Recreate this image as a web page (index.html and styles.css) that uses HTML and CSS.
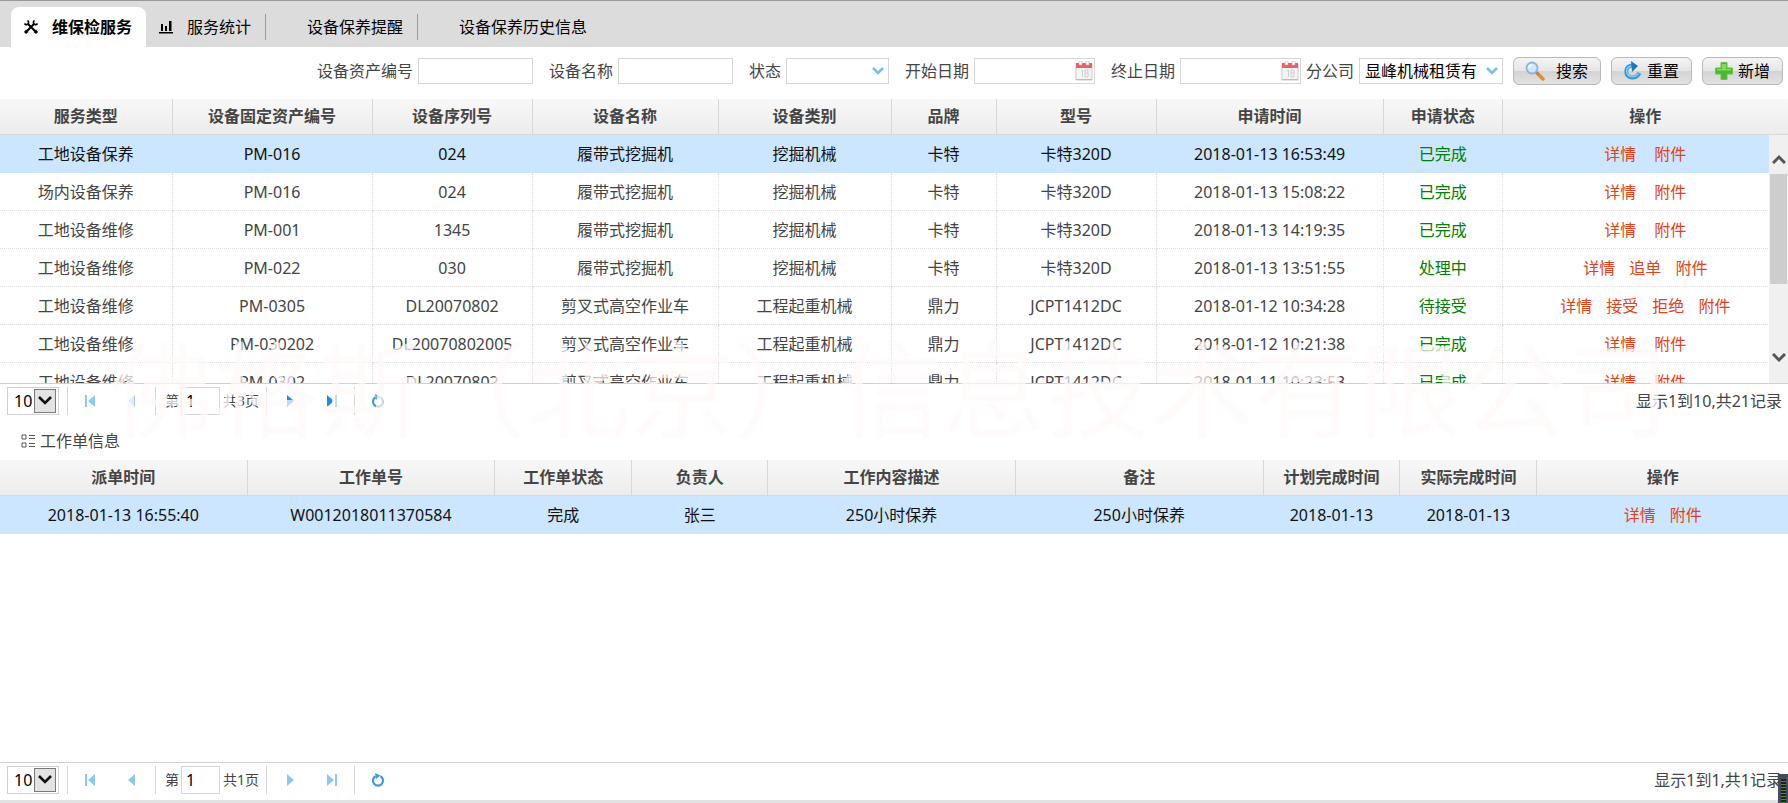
FILE: index.html
```
<!DOCTYPE html>
<html lang="zh-CN">
<head>
<meta charset="utf-8">
<title>维保检服务</title>
<link rel="stylesheet" href="styles.css">
</head>

<body>
<svg class="defs" width="0" height="0">
	<symbol id="cal" viewBox="0 0 18 20">
		<rect x="1" y="3" width="16" height="16" fill="#f5f5f5" stroke="#c9cdcd"/>
		<path d="M1 2h16v5H1z" fill="#e8616a"/>
		<path d="M4 0h3v4H4zM11 0h3v4h-3z" fill="#fff" stroke="#e9a0a4" stroke-width=".6"/>
		<path d="M6 10l1.500-1v7M10 9h3v7h-3zM10 12h3" fill="none" stroke="#cfcfcf"/>
		<path d="M1 18.500h16" stroke="#a9c4c4"/>
	</symbol>
	<symbol id="down" viewBox="0 0 14 10"><path d="M2 2l5 5 5-5" fill="none" stroke="#76c0ec" stroke-width="2.600"/></symbol>
	<symbol id="box" viewBox="0 0 22 24">
		<rect x=".5" y=".5" width="21" height="23" fill="#e3e3e3" stroke="#7a7a7a"/>
		<path d="M5 8l6 6 6-6" fill="none" stroke="#111" stroke-width="2.600"/>
	</symbol>
	<symbol id="first" viewBox="0 0 12 12"><path d="M1 0h2v12H1zM11 0v12L4 6z"/></symbol>
	<symbol id="prev" viewBox="0 0 12 12"><path d="M9 0v12L2 6z"/></symbol>
	<symbol id="next" viewBox="0 0 12 12"><path d="M3 0v12l7-6z"/></symbol>
	<symbol id="last" viewBox="0 0 12 12"><path d="M9 0h2v12H9zM1 0v12l7-6z"/></symbol>
	<symbol id="load" viewBox="0 0 14 14">
		<path d="M4.500 3.300A5 5 0 1 0 9.500 3.300" fill="none" stroke="#3c9bd6" stroke-width="2.200"/>
		<path d="M4 0l5.500 2.500L5 6z" fill="#3c9bd6"/>
	</symbol>
</svg>

<div class="tabs">
	<a class="tab on" href="#">
		<svg class="ico" viewBox="0 0 16 16"><path d="M4.500 4.500l7.500 7.500M11.500 4.500L4 12" stroke="#000" stroke-width="2"/><path d="M4.500 1.500A2.200 2.200 0 1 1 1.500 4.500M11.500 1.500A2.200 2.200 0 1 0 14.500 4.500" fill="none" stroke="#000" stroke-width="1.600"/><path d="M1 13l2-2.500 2.500 2.500L3 15zM15 13l-2-2.500-2.500 2.500L13 15z"/></svg>
		维保检服务
	</a>
	<a class="tab" href="#">
		<svg class="ico" viewBox="0 0 16 16"><path d="M1 13h14v1.500H1zM3 5h2v7H3zM7 7h2v5H7zM11 2h2.500v10H11z"/></svg>
		服务统计
	</a>
	<a class="tab line" href="#">设备保养提醒</a>
	<a class="tab line" href="#">设备保养历史信息</a>
</div>

<form class="search">
	<label for="code">设备资产编号</label><input class="txt" id="code" type="text">
	<label for="name">设备名称</label><input class="txt" id="name" type="text">
	<label for="state">状态</label><span class="sel"><select id="state"><option></option></select><svg><use href="#down"/></svg></span>
	<label for="start">开始日期</label><span class="date"><input id="start" type="text"><svg><use href="#cal"/></svg></span>
	<label for="end">终止日期</label><span class="date"><input id="end" type="text"><svg><use href="#cal"/></svg></span>
	<label class="near" for="comp">分公司</label><span class="sel comp"><select id="comp"><option>显峰机械租赁有限公司</option></select><svg><use href="#down"/></svg></span>
	<button class="btn wide" type="button">
		<svg viewBox="0 0 20 20"><path d="M12 12l6 6" stroke="#d98e3a" stroke-width="3.500" stroke-linecap="round"/><path d="M11 11l2.500 2.500" stroke="#888" stroke-width="2"/><circle cx="7" cy="7" r="5.500" fill="#cfe9fb" stroke="#8fb2dc" stroke-width="1.800"/><path d="M4 7a3 3 0 0 1 3-3" fill="none" stroke="#fff" stroke-width="1.500"/></svg>
		搜索
	</button>
	<button class="btn" type="button">
		<svg viewBox="0 0 20 20"><path d="M9 4.500C4 5 2.500 9 3.500 12.500 5 17.500 13 18.500 16.500 12" fill="none" stroke="#3a9ad9" stroke-width="4"/><path d="M8.500 5C4 5.500 3 9 4 12c1.500 4.500 8.500 5 11.500.5" fill="none" stroke="#8ed0f5" stroke-width="1.300"/><path d="M8 0l7 5-6 6z" fill="#1f78b8"/></svg>
		重置
	</button>
	<button class="btn" type="button">
		<svg viewBox="0 0 20 20"><path d="M7 1.500h6V7h5.500v6H13v5.500H7V13H1.500V7H7z" fill="#4cb82e" stroke="#6bbf4c"/><path d="M8 3h4v5h5v1.500H3V8h5z" fill="#84d956"/></svg>
		新增
	</button>
</form>

<div class="list">
	<table class="grid">
		<colgroup><col class="w172"><col class="w200"><col class="w160"><col class="w186"><col class="w173"><col class="w105"><col class="w160"><col class="w227"><col class="w119"><col></colgroup>
		<thead>
			<tr><th>服务类型</th><th>设备固定资产编号</th><th>设备序列号</th><th>设备名称</th><th>设备类别</th><th>品牌</th><th>型号</th><th>申请时间</th><th>申请状态</th><th>操作</th></tr>
		</thead>
		<tbody>
			<tr class="cur"><td>工地设备保养</td><td>PM-016</td><td>024</td><td>履带式挖掘机</td><td>挖掘机械</td><td>卡特</td><td>卡特320D</td><td>2018-01-13 16:53:49</td><td class="ok">已完成</td><td class="op two"><a href="#">详情</a><a href="#">附件</a></td></tr>
			<tr><td>场内设备保养</td><td>PM-016</td><td>024</td><td>履带式挖掘机</td><td>挖掘机械</td><td>卡特</td><td>卡特320D</td><td>2018-01-13 15:08:22</td><td class="ok">已完成</td><td class="op two"><a href="#">详情</a><a href="#">附件</a></td></tr>
			<tr><td>工地设备维修</td><td>PM-001</td><td>1345</td><td>履带式挖掘机</td><td>挖掘机械</td><td>卡特</td><td>卡特320D</td><td>2018-01-13 14:19:35</td><td class="ok">已完成</td><td class="op two"><a href="#">详情</a><a href="#">附件</a></td></tr>
			<tr><td>工地设备维修</td><td>PM-022</td><td>030</td><td>履带式挖掘机</td><td>挖掘机械</td><td>卡特</td><td>卡特320D</td><td>2018-01-13 13:51:55</td><td class="ok">处理中</td><td class="op"><a href="#">详情</a><a href="#">追单</a><a href="#">附件</a></td></tr>
			<tr><td>工地设备维修</td><td>PM-0305</td><td>DL20070802</td><td>剪叉式高空作业车</td><td>工程起重机械</td><td>鼎力</td><td>JCPT1412DC</td><td>2018-01-12 10:34:28</td><td class="ok">待接受</td><td class="op"><a href="#">详情</a><a href="#">接受</a><a href="#">拒绝</a><a href="#">附件</a></td></tr>
			<tr><td>工地设备维修</td><td>PM-030202</td><td>DL20070802005</td><td>剪叉式高空作业车</td><td>工程起重机械</td><td>鼎力</td><td>JCPT1412DC</td><td>2018-01-12 10:21:38</td><td class="ok">已完成</td><td class="op two"><a href="#">详情</a><a href="#">附件</a></td></tr>
			<tr><td>工地设备维修</td><td>PM-0302</td><td>DL20070802</td><td>剪叉式高空作业车</td><td>工程起重机械</td><td>鼎力</td><td>JCPT1412DC</td><td>2018-01-11 10:23:53</td><td class="ok">已完成</td><td class="op two"><a href="#">详情</a><a href="#">附件</a></td></tr>
		</tbody>
	</table>
	<div class="bar">
		<svg viewBox="0 0 14 10"><path d="M1 9l6-6 6 6" fill="none" stroke="#555" stroke-width="3"/></svg>
		<div class="thumb"></div>
		<svg viewBox="0 0 14 10"><path d="M1 1l6 6 6-6" fill="none" stroke="#555" stroke-width="3"/></svg>
	</div>
</div>

<div class="pager">
	<span class="num"><select aria-label="每页条数"><option>10</option></select><svg><use href="#box"/></svg></span>
	<div class="nav">
		<button type="button" aria-label="首页"><svg><use href="#first"/></svg></button>
		<button type="button" aria-label="上一页"><svg><use href="#prev"/></svg></button>
	</div>
	<div class="page"><label for="p1">第</label><input id="p1" type="text" value="1"><span>共3页</span></div>
	<div class="nav deep">
		<button type="button" aria-label="下一页"><svg><use href="#next"/></svg></button>
		<button type="button" aria-label="末页"><svg><use href="#last"/></svg></button>
	</div>
	<div class="nav"><button type="button" aria-label="刷新"><svg class="load"><use href="#load"/></svg></button></div>
	<div class="info">显示1到10,共21记录</div>
</div>

<div class="title">
	<svg viewBox="0 0 14 16"><path d="M1 2h4v4H1zM1 10h4v4H1zM8 2.500h6M8 5.500h6M8 10.500h6M8 13.500h6" fill="none" stroke="#555"/></svg>
	工作单信息
</div>

<div class="work">
	<table class="grid">
		<colgroup><col class="w247"><col class="w247"><col class="w137"><col class="w136"><col class="w247"><col class="w247"><col class="w137"><col class="w137"><col></colgroup>
		<thead>
			<tr><th>派单时间</th><th>工作单号</th><th>工作单状态</th><th>负责人</th><th>工作内容描述</th><th>备注</th><th>计划完成时间</th><th>实际完成时间</th><th>操作</th></tr>
		</thead>
		<tbody>
			<tr class="cur"><td>2018-01-13 16:55:40</td><td>W0012018011370584</td><td>完成</td><td>张三</td><td>250小时保养</td><td>250小时保养</td><td>2018-01-13</td><td>2018-01-13</td><td class="op"><a href="#">详情</a><a href="#">附件</a></td></tr>
		</tbody>
	</table>
</div>

<div class="pager foot">
	<span class="num"><select aria-label="每页条数"><option>10</option></select><svg><use href="#box"/></svg></span>
	<div class="nav">
		<button type="button" aria-label="首页"><svg><use href="#first"/></svg></button>
		<button type="button" aria-label="上一页"><svg><use href="#prev"/></svg></button>
	</div>
	<div class="page"><label for="p2">第</label><input id="p2" type="text" value="1"><span>共1页</span></div>
	<div class="nav">
		<button type="button" aria-label="下一页"><svg><use href="#next"/></svg></button>
		<button type="button" aria-label="末页"><svg><use href="#last"/></svg></button>
	</div>
	<div class="nav"><button type="button" aria-label="刷新"><svg class="load"><use href="#load"/></svg></button></div>
	<div class="info">显示1到1,共1记录</div>
</div>

<div class="mark">佛格斯（北京）信息技术有限公司</div>
<div class="meter"><i></i></div>
</body>
</html>
```
FILE: styles.css
```
*{margin:0; padding:0; box-sizing:border-box;}
html,body{height:100%;}
body{display:flex; flex-direction:column; position:relative; overflow:hidden; background:#fff; color:#444; font:16px/24px "Noto Sans","Noto Sans CJK SC",sans-serif;}
input,select,button{font:inherit; color:#000;}
a{text-decoration:none;}
.defs{position:absolute;}

.tabs{display:flex; flex:none; height:47px; padding:6px 0 0 11px; background:#dcdcdc; border-top:1px solid #999;}
.tab{display:flex; align-items:center; position:relative; height:40px; padding:0 14px 0 12px; color:#000;}
.tab.on{background:#fff; border-radius:8px 8px 0 0; font-weight:bold;}
.tab .ico{width:16px; height:16px; margin-right:13px;}
.tab.line{padding:0 14px 0 42px;}
.tab.line:before{content:''; position:absolute; left:0; top:7px; width:1px; height:26px; background:#999;}

.search{display:flex; flex:none; align-items:center; justify-content:flex-end; height:52px; padding:0 5px 4px 0;}
.search label{margin:0 5px 0 16px; white-space:nowrap;}
.search label.near{margin-left:5px;}
.search input,.search select{height:26px; border:1px solid #d6d6d6; border-radius:0; background:#fff; outline:none;}
.txt{width:115px;}
.date,.sel,.num{position:relative; display:flex;}
.date input{width:121px;}
.date svg{position:absolute; right:2px; top:3px; width:18px; height:20px;}
.sel select{appearance:none; width:103px; padding:0 26px 0 5px;}
.sel.comp select{width:144px;}
.sel svg{position:absolute; right:4px; top:8px; width:14px; height:10px; pointer-events:none;}
.btn{display:flex; align-items:center; justify-content:space-between; width:81px; height:28px; margin-left:10px; padding:0 12px 0 11px; border:1px solid #b9b9b9; border-radius:6px; background:linear-gradient(#f4f4f4,#e6e6e6 50%,#d3d3d3 50%,#e2e2e2);}
.btn.wide{width:88px;}
.btn svg{width:20px; height:20px;}

.list{position:relative; flex:none; height:284px; overflow:hidden;}
.grid{width:100%; table-layout:fixed; border-collapse:separate; border-spacing:0;}
.grid th{height:36px; padding-bottom:2px; background:linear-gradient(#f8f8f8,#ececec); border-right:1px solid #d8d8d8; border-bottom:1px solid #d8d8d8; font-weight:bold; white-space:nowrap;}
.grid td{height:38px; border-right:1px dotted #ddd; border-bottom:1px dotted #ddd; text-align:center; white-space:nowrap; overflow:hidden;}
.grid th:last-child,.grid td:last-child{border-right:0;}
.grid .cur td{background:#cce6ff; border-color:#cce6ff; color:#111;}
.grid td.ok,.grid .cur td.ok{color:#008000;}
.op a{margin:0 7px; color:#e4421a;}
.op.two a{margin:0 9px;}
/* column widths, share of the full table */
.w105{width:5.87%;}
.w119{width:6.66%;}
.w136{width:7.61%;}
.w137{width:7.66%;}
.w160{width:8.95%;}
.w172{width:9.65%;}
.w173{width:9.68%;}
.w186{width:10.4%;}
.w200{width:11.19%;}
.w227{width:12.7%;}
.w247{width:13.85%;}

.bar{position:absolute; right:0; top:36px; bottom:0; display:flex; flex-direction:column; width:19px; padding:19px 1px 20px; background:#f0f0f0;}
.bar svg{flex:none; width:14px; height:10px; margin:0 auto;}
.thumb{height:110px; margin:10px 0 auto; background:#cdcdcd;}

.pager{display:flex; flex:none; align-items:center; height:38px; padding:0 6px 3px 7px; border-top:1px solid #d0d0d0;}
.num select{appearance:none; width:52px; height:28px; padding-left:6px; border:1px solid #d0d0d0; border-radius:0; background:#fff;}
.num svg{position:absolute; right:3px; top:2px; width:22px; height:24px; pointer-events:none;}
.nav{display:flex; align-items:center; height:28px; padding:0 14px; border-left:1px solid #d6d6d6;}
.nav button{display:flex; width:16px; margin-right:26px; padding:2px; border:0; background:none;}
.nav button:last-child{margin-right:0;}
.nav svg{width:12px; height:12px; fill:#8cc9f2;}
.nav.deep svg{fill:#1d8de0;}
.nav svg.load{width:14px; height:14px;}
.num + .nav{margin-left:8px; padding-right:15px;}
.page{display:flex; align-items:center; height:28px; padding:0 7px 0 9px; border-left:1px solid #d6d6d6; font-size:14px;}
.page input{width:39px; height:28px; margin:0 3px 0 2px; padding-left:4px; border:1px solid #d6d6d6; font-size:16px;}
.page + .nav{padding:0 14px 0 15px;}
.nav + .nav button{width:18px;}
.info{margin-left:auto; white-space:nowrap;}

.title{display:flex; flex:none; align-items:center; height:39px; padding-left:21px;}
.title svg{width:14px; height:16px; margin-right:5px;}
.work{flex:1; min-height:0; overflow:hidden;}
.foot{height:41px; border-bottom:3px solid #e2e2e2;}

.mark{position:absolute; left:110px; top:330px; color:rgba(255,250,250,.72); font-size:104px; line-height:120px; white-space:nowrap; pointer-events:none;}
.meter{position:absolute; right:0; bottom:0; width:10px; height:29px; padding:5px 2px 0 3px; background:#454b58;}
.meter i{display:block; height:24px; background:repeating-linear-gradient(#1c2028 0,#1c2028 2px,#4f8a36 2px,#4f8a36 3px);}
```
